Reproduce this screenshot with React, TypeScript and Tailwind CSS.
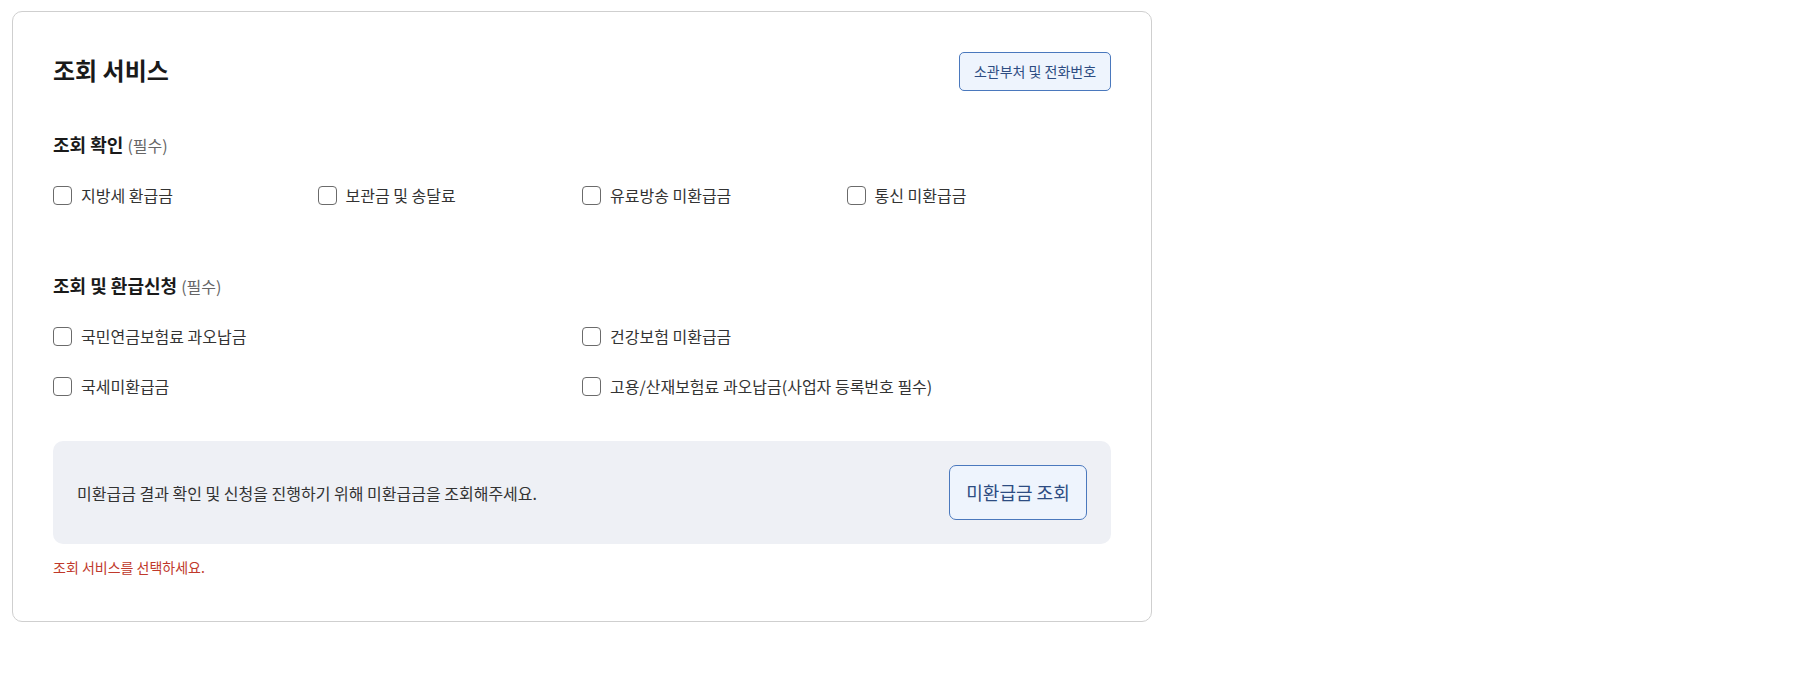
import { useState } from 'react';

const checkOnly = ['지방세 환급금', '보관금 및 송달료', '유료방송 미환급금', '통신 미환급금'];
const checkAndApply = [
    '국민연금보험료 과오납금',
    '건강보험 미환급금',
    '국세미환급금',
    '고용/산재보험료 과오납금(사업자 등록번호 필수)',
];

function CheckItem({ label, checked, onToggle }: { label: string; checked: boolean; onToggle: () => void }) {
    return (
        <label className="flex items-center gap-[9px] cursor-pointer h-6 text-[16px] text-[#333]">
            <span
                onClick={onToggle}
                className={`w-[19px] h-[19px] rounded-[4px] border border-[#6b6b6b] bg-white flex items-center justify-center ${checked ? 'bg-[#2f5da8] border-[#2f5da8]' : ''}`}
            >
                {checked && (
                    <svg viewBox="0 0 16 16" className="w-3 h-3" fill="none" stroke="white" strokeWidth="2.5">
                        <path d="M3 8.5 6.5 12 13 4.5" />
                    </svg>
                )}
            </span>
            <span>{label}</span>
        </label>
    );
}

export default function App() {
    const [selected, setSelected] = useState<string[]>([]);

    function toggle(name: string) {
        setSelected(prev => (prev.includes(name) ? prev.filter(n => n !== name) : [...prev, name]));
    }

    return (
        <div
            className="bg-white min-h-screen px-3 pt-[11px]"
            style={{ fontFamily: '"Noto Sans CJK KR", "Noto Sans", sans-serif' }}
        >
            <div className="w-[1140px] border border-[#cfcfcf] rounded-[10px] px-10 pt-10 pb-[44px]">
                {/* Header */}
                <div className="flex items-center justify-between">
                    <h1 className="text-[24px] font-bold text-[#1a1a1a] leading-8 pb-1">조회 서비스</h1>
                    <button className="h-[39px] w-[152px] rounded-[5px] border border-[#4a78bd] bg-[#eef4fd] text-[14px] text-[#2d4c82]">
                        소관부처 및 전화번호
                    </button>
                </div>

                {/* Section 1 */}
                <div className="mt-[41px]">
                    <h2 className="text-[18px] leading-6 font-bold text-[#1a1a1a]">
                        조회 확인 <span className="text-[16px] font-normal text-[#666]">(필수)</span>
                    </h2>
                    <div className="grid grid-cols-4 mt-[26px]">
                        {checkOnly.map(item => (
                            <CheckItem key={item} label={item} checked={selected.includes(item)} onToggle={() => toggle(item)} />
                        ))}
                    </div>
                </div>

                {/* Section 2 */}
                <div className="mt-[66px]">
                    <h2 className="text-[18px] leading-6 font-bold text-[#1a1a1a]">
                        조회 및 환급신청 <span className="text-[16px] font-normal text-[#666]">(필수)</span>
                    </h2>
                    <div className="grid grid-cols-2 mt-[26px] gap-y-[26px]">
                        {checkAndApply.map(item => (
                            <CheckItem key={item} label={item} checked={selected.includes(item)} onToggle={() => toggle(item)} />
                        ))}
                    </div>
                </div>

                {/* Info box */}
                <div className="mt-[43px] bg-[#eef0f5] rounded-[10px] p-6 flex items-center justify-between">
                    <p className="text-[16px] text-[#333]">미환급금 결과 확인 및 신청을 진행하기 위해 미환급금을 조회해주세요.</p>
                    <button className="h-[55px] w-[138px] rounded-[7px] border border-[#4a78bd] bg-[#eef4fd] text-[18px] text-[#2d4c82]">
                        미환급금 조회
                    </button>
                </div>

                <p className="mt-[13px] text-[14px] leading-5 text-[#c0392b]">조회 서비스를 선택하세요.</p>
            </div>
        </div>
    );
}
